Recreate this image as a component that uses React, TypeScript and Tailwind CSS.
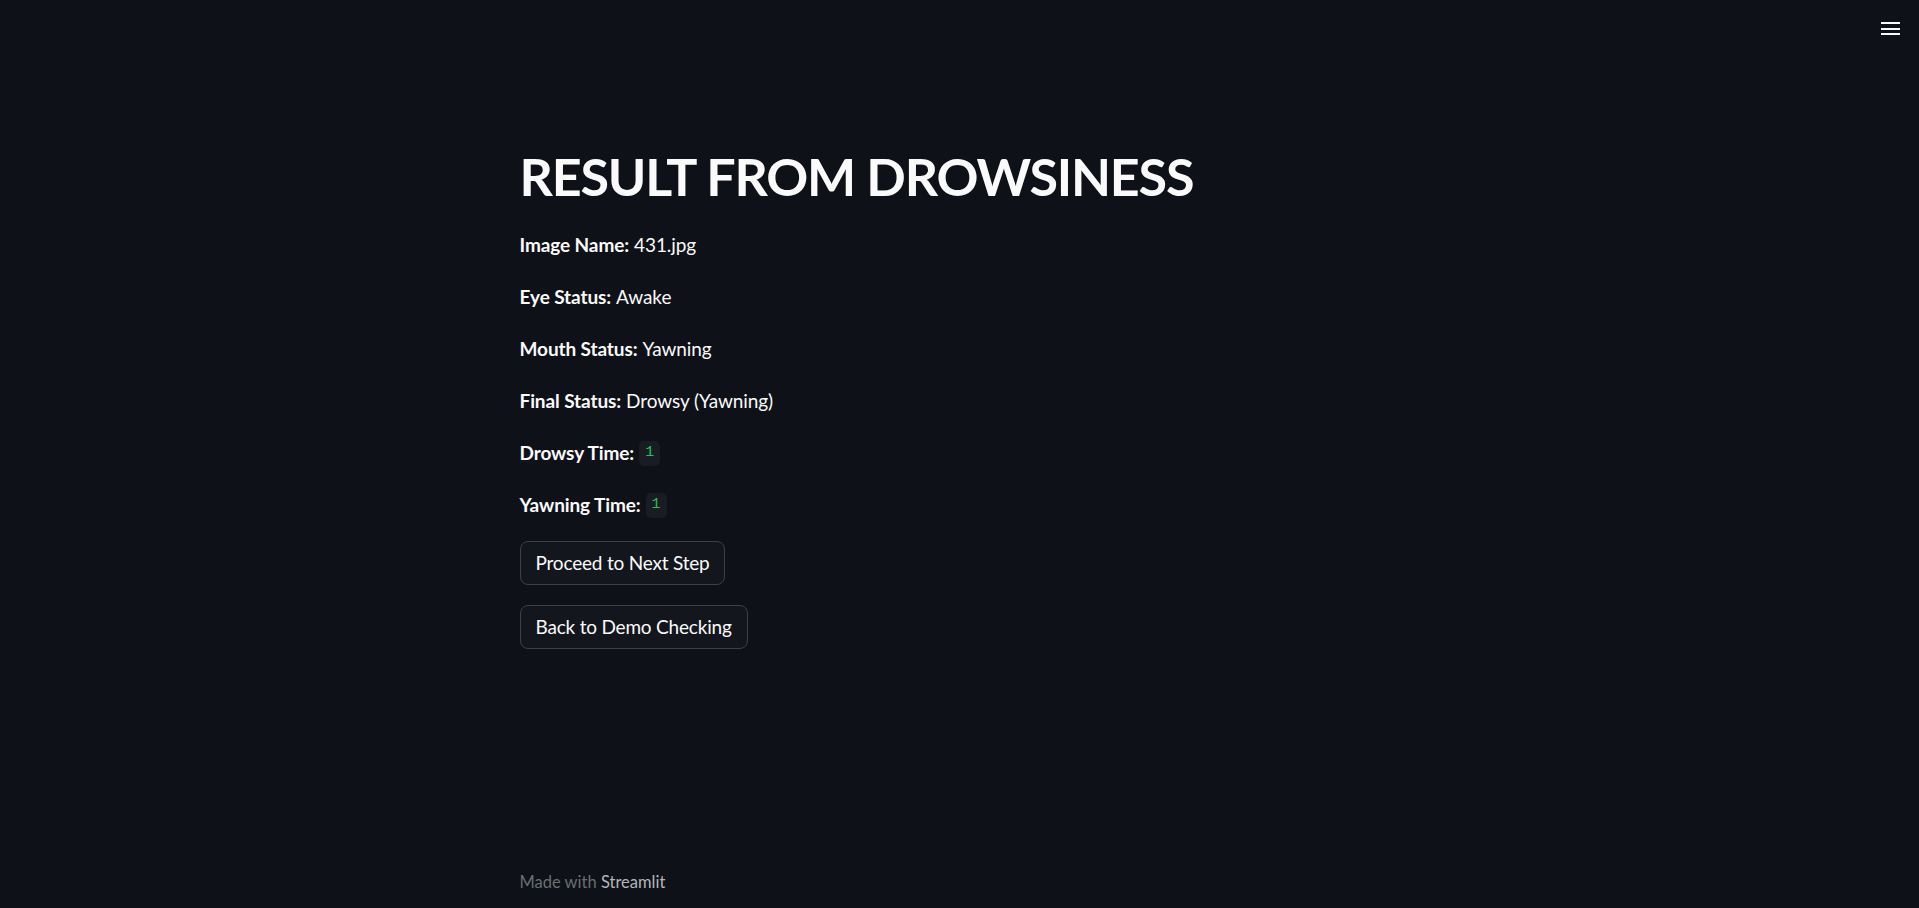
import React from 'react';

const font = { fontFamily: '"Lato", "Liberation Sans", sans-serif' };

const Row = ({ label, children }: { label: string; children: React.ReactNode }) => (
  <p className="h-[32px] flex items-center text-[19px] leading-[32px] tracking-[-0.1px] text-[#fafafa]">
    <strong className="font-bold mr-[5px]">{label}</strong>
    {children}
  </p>
);

const Code = ({ value }: { value: string }) => (
  <code className="inline-flex items-center justify-center h-[25px] px-[6px] rounded-[5px] bg-[#1a1c23] text-[#21c354] text-[15px] font-['Liberation_Mono',monospace]">
    {value}
  </code>
);

export default function App() {
  return (
    <div className="relative h-[908px] bg-[#0e1117] text-[#fafafa] flex flex-col" style={font}>
      {/* Header menu */}
      <button className="absolute top-[22px] right-[19px] flex flex-col gap-[3.5px] w-[19px]">
        <span className="h-[2px] w-full bg-[#fafafa]" />
        <span className="h-[2px] w-full bg-[#fafafa]" />
        <span className="h-[2px] w-full bg-[#fafafa]" />
      </button>

      <main className="w-[880px] mx-auto pt-[143px] flex flex-col gap-[20px] flex-1">
        <h1 className="text-[52px] leading-[66px] font-bold tracking-[-1.2px]">RESULT FROM DROWSINESS</h1>
        <Row label="Image Name:">431.jpg</Row>
        <Row label="Eye Status:">Awake</Row>
        <Row label="Mouth Status:">Yawning</Row>
        <Row label="Final Status:">Drowsy (Yawning)</Row>
        <Row label="Drowsy Time:"><Code value="1" /></Row>
        <Row label="Yawning Time:"><Code value="1" /></Row>
        <div>
          <button className="h-[44px] px-[15px] rounded-[8px] border border-[#3d4046] bg-[#13161d] text-[19px] tracking-[-0.2px] text-[#fafafa]">
            Proceed to Next Step
          </button>
        </div>
        <div>
          <button className="h-[44px] px-[15px] rounded-[8px] border border-[#3d4046] bg-[#13161d] text-[19px] tracking-[-0.2px] text-[#fafafa]">
            Back to Demo Checking
          </button>
        </div>
      </main>

      <footer className="w-[880px] mx-auto pb-[12px] text-[16.5px] leading-[28px] text-[#6b6e74]">
        Made with <span className="text-[#b4b6ba]">Streamlit</span>
      </footer>
    </div>
  );
}
